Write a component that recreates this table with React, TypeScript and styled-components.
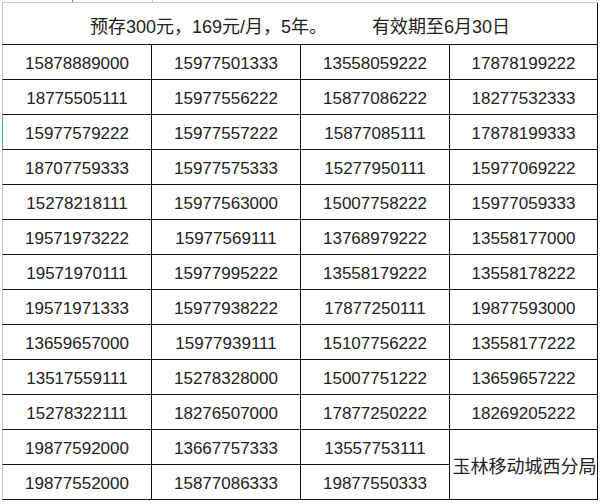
import * as React from 'react'
import styled, { createGlobalStyle } from 'styled-components'

const rows: string[][] = [
  ['15878889000', '15977501333', '13558059222', '17878199222'],
  ['18775505111', '15977556222', '15877086222', '18277532333'],
  ['15977579222', '15977557222', '15877085111', '17878199333'],
  ['18707759333', '15977575333', '15277950111', '15977069222'],
  ['15278218111', '15977563000', '15007758222', '15977059333'],
  ['19571973222', '15977569111', '13768979222', '13558177000'],
  ['19571970111', '15977995222', '13558179222', '13558178222'],
  ['19571971333', '15977938222', '17877250111', '19877593000'],
  ['13659657000', '15977939111', '15107756222', '13558177222'],
  ['13517559111', '15278328000', '15007751222', '13659657222'],
  ['15278322111', '18276507000', '17877250222', '18269205222'],
  ['19877592000', '13667757333', '13557753111'],
  ['19877552000', '15877086333', '19877550333'],
]

export default function App() {
  return (
    <>
      <GlobalStyle />
      <Page>
        <TopStrip />
        <Sheet>
          <Title>{'预存300元，169元/月，5年。         有效期至6月30日'}</Title>
          {rows.map((row, r) =>
            row.map((num, c) => (
              <Cell key={`${r}-${c}`} $first={c === 0} $selected={r === 2 && c === 0}>
                {num}
              </Cell>
            ))
          )}
          <Merged>玉林移动城西分局</Merged>
        </Sheet>
      </Page>
    </>
  )
}

const GlobalStyle = createGlobalStyle`
  html, body {
    margin: 0;
    padding: 0;
    background: #ffffff;
  }
  body {
    font-family: "Liberation Sans", "Noto Sans CJK SC", sans-serif;
    color: #222;
  }
`

const Page = styled.div`
  width: 602px;
  height: 504px;
  padding-left: 2px;
  box-sizing: border-box;
  overflow: hidden;
`

const TopStrip = styled.div`
  height: 3px;
  width: 596px;
  border-bottom: 1px solid #c8c8c8;
  box-sizing: border-box;
  background: linear-gradient(
    to right,
    transparent 70px,
    #888 70px,
    #888 71px,
    transparent 71px,
    transparent 150px,
    #c8c8c8 150px,
    #c8c8c8 151px,
    transparent 151px
  );
`

const Sheet = styled.div`
  display: grid;
  grid-template-columns: 150px 149px 149px 148px;
  grid-template-rows: 42px repeat(13, 35px);
  width: 596px;
`

const Title = styled.div`
  grid-column: 1 / span 4;
  display: flex;
  align-items: center;
  justify-content: center;
  white-space: pre;
  font-size: 18px;
  padding-top: 2px;
  border-left: 1px solid #c8c8c8;
  border-right: 1px solid #111;
  border-bottom: 1px solid #111;
  box-sizing: border-box;
`

const Cell = styled.div<{ $first?: boolean; $selected?: boolean }>`
  display: flex;
  align-items: center;
  justify-content: center;
  font-size: 17px;
  padding-top: 3px;
  box-sizing: border-box;
  border-right: 1px solid #111;
  border-bottom: 1px solid #111;
  border-left: ${(p) =>
    p.$selected ? '1px solid #3fbf7f' : p.$first ? '1px solid #c8c8c8' : 'none'};
`

const Merged = styled.div`
  grid-column: 4;
  grid-row: 13 / span 2;
  display: flex;
  align-items: center;
  justify-content: center;
  font-size: 18px;
  font-family: "Noto Sans CJK SC", sans-serif;
  box-sizing: border-box;
  border-right: 1px solid #111;
  border-bottom: 1px solid #111;
  white-space: nowrap;
  padding-left: 2px;
`
